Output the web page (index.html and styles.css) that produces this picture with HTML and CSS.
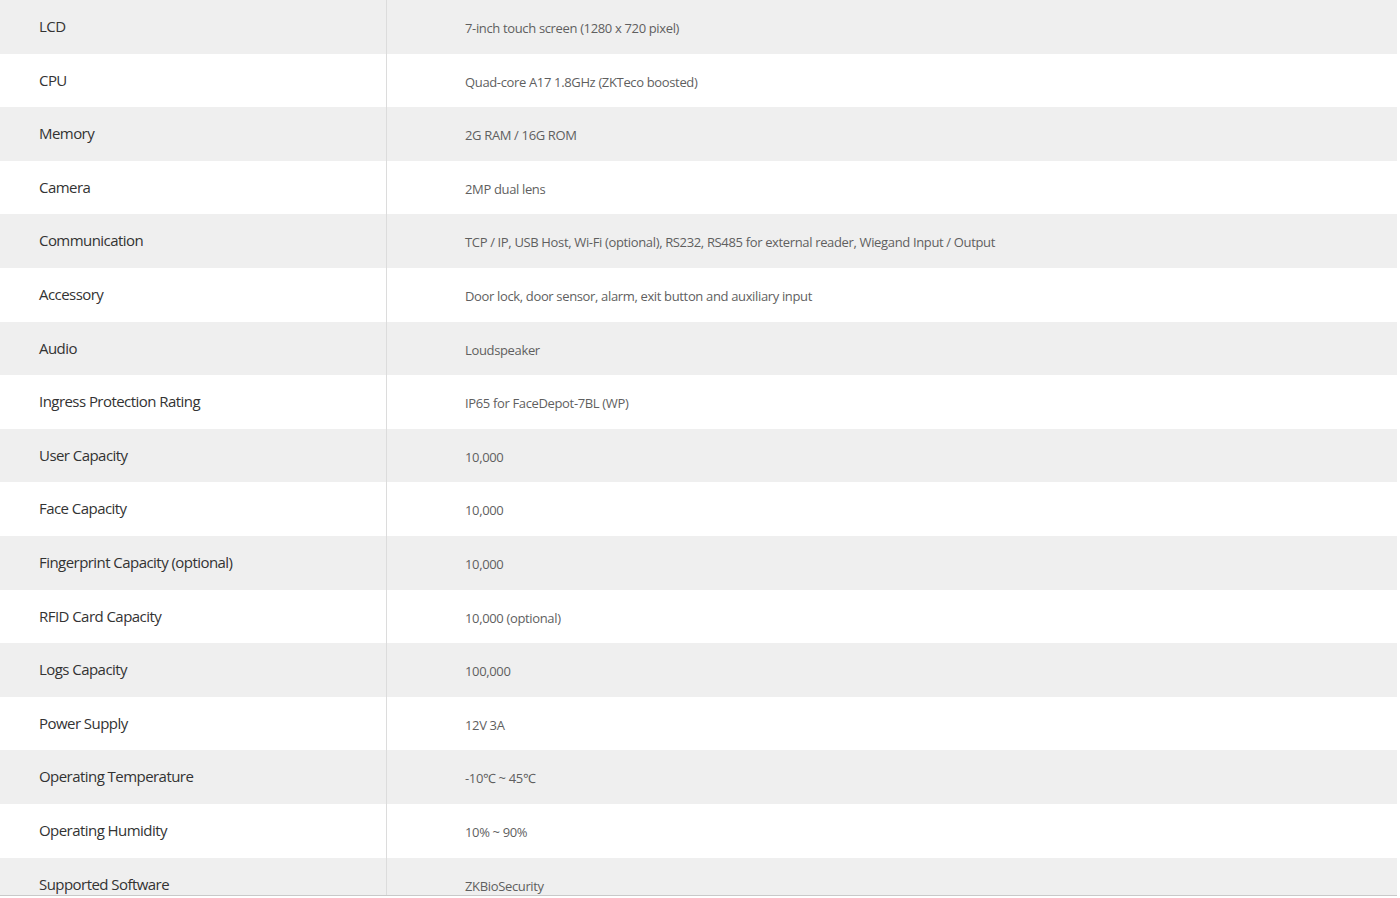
FILE: index.html
```html
<!DOCTYPE html>
<html lang="en">
<head>
<meta charset="utf-8">
<title>Specifications</title>
<link rel="stylesheet" href="styles.css">
</head>
<body>
<div class="specs">
  <div class="row"><div class="label">LCD</div><div class="value">7-inch touch screen (1280 x 720 pixel)</div></div>
  <div class="row"><div class="label">CPU</div><div class="value">Quad-core A17 1.8GHz (ZKTeco boosted)</div></div>
  <div class="row"><div class="label">Memory</div><div class="value">2G RAM / 16G ROM</div></div>
  <div class="row"><div class="label">Camera</div><div class="value">2MP dual lens</div></div>
  <div class="row"><div class="label">Communication</div><div class="value">TCP / IP, USB Host, Wi-Fi (optional), RS232, RS485 for external reader, Wiegand Input / Output</div></div>
  <div class="row"><div class="label">Accessory</div><div class="value">Door lock, door sensor, alarm, exit button and auxiliary input</div></div>
  <div class="row"><div class="label">Audio</div><div class="value">Loudspeaker</div></div>
  <div class="row"><div class="label">Ingress Protection Rating</div><div class="value">IP65 for FaceDepot-7BL (WP)</div></div>
  <div class="row"><div class="label">User Capacity</div><div class="value">10,000</div></div>
  <div class="row"><div class="label">Face Capacity</div><div class="value">10,000</div></div>
  <div class="row"><div class="label">Fingerprint Capacity (optional)</div><div class="value">10,000</div></div>
  <div class="row"><div class="label">RFID Card Capacity</div><div class="value">10,000 (optional)</div></div>
  <div class="row"><div class="label">Logs Capacity</div><div class="value">100,000</div></div>
  <div class="row"><div class="label">Power Supply</div><div class="value">12V 3A</div></div>
  <div class="row"><div class="label">Operating Temperature</div><div class="value">-10℃ ~ 45℃</div></div>
  <div class="row"><div class="label">Operating Humidity</div><div class="value">10% ~ 90%</div></div>
  <div class="row"><div class="label">Supported Software</div><div class="value">ZKBioSecurity</div></div>
</div>
</body>
</html>
```
FILE: styles.css
```css
html, body {
  margin: 0;
  padding: 0;
  background: #ffffff;
}
body {
  font-family: "Open Sans", "Noto Sans", sans-serif;
  overflow: hidden;
}
.specs {
  width: 1397px;
  height: 895px;
  overflow: hidden;
  border-bottom: 1px solid #c9c9c9;
}
.row {
  display: grid;
  grid-template-columns: 387px 1fr;
  height: 53.6px;
}
.row:nth-child(odd) {
  background: #efefef;
}
.label {
  border-right: 1px solid #dcdcdc;
  padding: 16px 0 0 39px;
  font-size: 15px;
  line-height: 20px;
  letter-spacing: -0.55px;
  color: #333333;
}
.value {
  padding: 18px 0 0 78px;
  font-size: 13px;
  line-height: 20px;
  letter-spacing: -0.35px;
  color: #5f5f5f;
}
```
